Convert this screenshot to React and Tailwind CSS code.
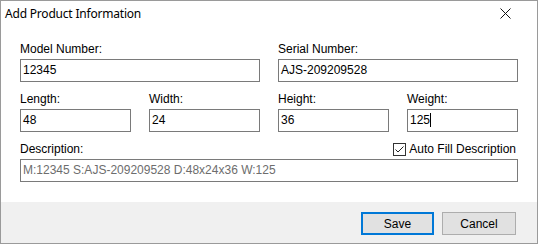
import { useState } from 'react';

const box = 'h-[23px] w-full border border-[#7a7a7a] bg-white px-[2px] text-[12px] leading-[21px] outline-none';
const label = 'h-[14px] leading-[14px] text-[12px] text-black mb-[3px]';

function Field({ name, value, cursor }) {
  return (
    <div>
      <div className={label}>{name}</div>
      <div className={box + ' text-black'}>
        {value}
        {cursor && <span className="inline-block w-px h-[14px] bg-black align-[-3px]" />}
      </div>
    </div>
  );
}

export default function App() {
  const [auto, setAuto] = useState(true);

  return (
    <div className="w-[538px] h-[244px] border border-[#9a9a9a] bg-white flex flex-col font-['Liberation_Sans',Arial,sans-serif] overflow-hidden">
      {/* Title bar */}
      <div className="h-[30px] flex items-center justify-between pl-[4px] pr-[26px]">
        <span className="text-[12px] text-black font-['Noto_Sans',sans-serif] tracking-[-0.2px] -mt-[4px]">Add Product Information</span>
        <svg width="11" height="11" viewBox="0 0 11 11" className="-mt-[5px]">
          <path d="M0.5 0.5 L10.5 10.5 M10.5 0.5 L0.5 10.5" stroke="#111" strokeWidth="1" />
        </svg>
      </div>

      {/* Form */}
      <div className="flex-1 px-[19px] pt-[11px] flex flex-col gap-[10px]">
        <div className="grid grid-cols-2 gap-x-[18px]">
          <Field name="Model Number:" value="12345" />
          <Field name="Serial Number:" value="AJS-209209528" />
        </div>
        <div className="grid grid-cols-2 gap-x-[18px]">
          <div className="grid grid-cols-2 gap-x-[18px]">
            <Field name="Length:" value="48" />
            <Field name="Width:" value="24" />
          </div>
          <div className="grid grid-cols-2 gap-x-[18px]">
            <Field name="Height:" value="36" />
            <Field name="Weight:" value="125" cursor />
          </div>
        </div>
        <div>
          <div className="flex items-center justify-between h-[14px] mb-[3px]">
            <span className="text-[12px] leading-[14px] text-black">Description:</span>
            <label className="flex items-center gap-[3px] cursor-pointer mr-[2px]" onClick={() => setAuto(!auto)}>
              <span className="w-[13px] h-[13px] border border-[#333] bg-white flex items-center justify-center">
                {auto && (
                  <svg width="11" height="11" viewBox="0 0 11 11">
                    <path d="M1.5 5.5 L4 8 L9.5 2.5" stroke="#222" strokeWidth="1" fill="none" />
                  </svg>
                )}
              </span>
              <span className="text-[12px] leading-[14px] text-black">Auto Fill Description</span>
            </label>
          </div>
          <div className={box + ' text-[#6d6d6d]'}>M:12345 S:AJS-209209528 D:48x24x36 W:125</div>
        </div>
      </div>

      {/* Footer */}
      <div className="h-[41px] bg-[#f0f0f0] flex justify-end items-start pt-[10px] pr-[21px] gap-[8px]">
        <button className="w-[73px] h-[23px] border-2 border-[#0078d7] bg-[#e1e1e1] text-[12px] text-black">Save</button>
        <button className="w-[74px] h-[23px] border border-[#adadad] bg-[#e1e1e1] text-[12px] text-black">Cancel</button>
      </div>
    </div>
  );
}
